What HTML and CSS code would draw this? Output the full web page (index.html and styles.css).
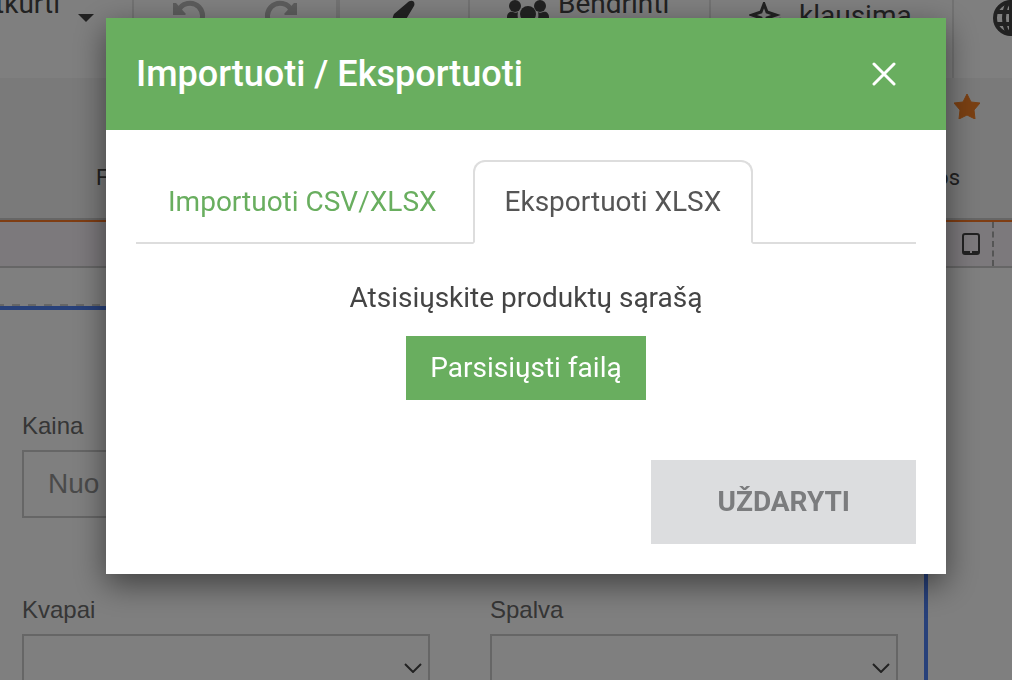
FILE: index.html
```html
<!DOCTYPE html>
<html lang="lt">
<head>
  <meta charset="UTF-8" />
  <title>Importuoti / Eksportuoti</title>
  <link rel="stylesheet" href="styles.css">
</head>
<body>
  <div class="page">
    <div class="toolbar">
      <div class="tool tool-restore">
        <span>Atkurti</span>
        <svg class="caret" width="16" height="8" viewBox="0 0 16 8"><path d="M0 0h16L8 8z" fill="currentColor"/></svg>
      </div>
      <div class="tool tool-history">
        <svg width="34" height="36" viewBox="0 0 34 36" fill="none" stroke="currentColor" stroke-width="5"><path d="M6 12C9 2 21 1 27 7c7 8 3 20-8 22"/><path d="M1 3l3 0 10 11-1 1H1z" fill="currentColor" stroke="none"/></svg>
        <svg width="34" height="36" viewBox="0 0 34 36" fill="none" stroke="currentColor" stroke-width="5"><path d="M28 12C25 2 13 1 7 7c-7 8-3 20 8 22"/><path d="M33 3l-3 0-10 11 1 1h12z" fill="currentColor" stroke="none"/></svg>
      </div>
      <div class="tool tool-brush">
        <svg width="28" height="40" viewBox="0 0 28 40" fill="currentColor"><path d="M17 13c4-4 9-2 7 3L15 31c-3 4-9 5-14 1 2-1 1-4 3-8z"/></svg>
      </div>
      <div class="tool tool-share">
        <svg width="42" height="40" viewBox="0 0 42 40" fill="currentColor"><circle cx="8" cy="16" r="6"/><circle cx="33" cy="16" r="6"/><circle cx="21" cy="24" r="8"/><path d="M0 36v-9c0-4 3-6 6-5 2 1 4 1 5 0-1 5 0 8 3 11v3zM42 36v-9c0-4-3-6-6-5-2 1-4 1-5 0 1 5 0 8-3 11v3z"/></svg>
        <span>Bendrinti</span>
      </div>
      <div class="tool tool-question">
        <svg width="32" height="30" viewBox="0 0 32 30" fill="none" stroke="currentColor" stroke-width="3"><path d="M15 2l3 8 9 3-9 3-3 9-3-9-9-3 9-3z"/><path d="M31 15l1 3 0 6-1-1-1-3-3-1 3-1z" fill="currentColor" stroke="none"/></svg>
        <span>klausima</span>
      </div>
      <div class="tool tool-language">
        <svg width="36" height="36" viewBox="0 0 36 36" fill="none" stroke="currentColor" stroke-width="4"><circle cx="18" cy="18" r="16"/><ellipse cx="18" cy="18" rx="7" ry="16"/><path d="M3 12h30M3 24h30M18 2v32"/></svg>
      </div>
    </div>

    <div class="steps">
      <svg class="star" width="26" height="25" viewBox="0 0 26 25"><path d="M13 0l4 8 9 1-6 7 1 9-8-4-8 4 1-9-6-7 9-1z" fill="currentColor" stroke="currentColor" stroke-linejoin="round"/></svg>
      <div class="step-names">
        <span>F</span>
        <span>os</span>
      </div>
    </div>

    <div class="devices">
      <svg width="18" height="22" viewBox="0 0 18 22"><rect x="1" y="1" width="16" height="20" rx="2" fill="none" stroke="currentColor" stroke-width="2"/><path d="M1 18h7v2h2v-2h7v3H1z" fill="currentColor"/></svg>
      <div class="devices-end"></div>
    </div>

    <div class="form-area">
      <div class="dashes"></div>
      <div class="form-box">
        <div class="field">
          <label for="price">Kaina</label>
          <input type="text" id="price" placeholder="Nuo">
        </div>
        <div class="field field-left">
          <label for="smell">Kvapai</label>
          <div class="select-wrap">
            <select id="smell"><option></option></select>
            <svg class="chevron" width="18" height="10" viewBox="0 0 18 10"><path d="M1 1l8 8 8-8" fill="none" stroke="currentColor" stroke-width="2"/></svg>
          </div>
        </div>
        <div class="field">
          <label for="color">Spalva</label>
          <div class="select-wrap">
            <select id="color"><option></option></select>
            <svg class="chevron" width="18" height="10" viewBox="0 0 18 10"><path d="M1 1l8 8 8-8" fill="none" stroke="currentColor" stroke-width="2"/></svg>
          </div>
        </div>
      </div>
    </div>
  </div>

  <div class="overlay">
    <div class="modal" role="dialog" aria-labelledby="modal-title">
      <div class="modal-header">
        <h2 id="modal-title">Importuoti / Eksportuoti</h2>
        <button class="close" aria-label="Uždaryti">
          <svg width="24" height="24" viewBox="0 0 24 24"><path d="M2 2l20 20M22 2L2 22" stroke="currentColor" stroke-width="3" stroke-linecap="round"/></svg>
        </button>
      </div>
      <div class="modal-body">
        <div class="tabs">
          <a href="#import">Importuoti CSV/XLSX</a>
          <a href="#export" class="active">Eksportuoti XLSX</a>
        </div>
        <div class="export">
          <p>Atsisiųskite produktų sąrašą</p>
          <button class="download">Parsisiųsti failą</button>
        </div>
        <div class="modal-footer">
          <button class="cancel">UŽDARYTI</button>
        </div>
      </div>
    </div>
  </div>
</body>
</html>
```

FILE: styles.css
```css
* {
  box-sizing: border-box;
}

body {
  margin: 0;
  height: 100vh;
  overflow: hidden;
  font-family: Roboto, sans-serif;
  font-size: 28px;
  color: #444;
  background-color: #fff;
}

button {
  border: none;
  font-family: inherit;
  font-size: 28px;
  cursor: pointer;
}

svg {
  display: block;
  flex-shrink: 0;
}

/* toolbar is scrolled a little past the top edge */
.page {
  margin-top: -10px;
}

.toolbar {
  display: flex;
  height: 88px;
  line-height: 28px;
}

.tool {
  display: flex;
  align-items: flex-start;
  flex-shrink: 0;
  border-right: 2px solid #e4e4e4;
}

.tool-restore {
  width: 134px;
  justify-content: flex-end;
  gap: 18px;
  padding-right: 38px;
}

.caret {
  margin-top: 24px;
}

.tool-history {
  width: 206px;
  padding: 10px 38px 0;
  justify-content: space-between;
  color: #b8b8b8;
  border-right: 4px solid #e4e4e4;
}

.tool-brush {
  width: 130px;
  justify-content: center;
}

.tool-share {
  width: 241px;
  padding-left: 37px;
  gap: 9px;
}

.tool-question {
  width: 243px;
  padding: 12px 0 0 38px;
  gap: 18px;
}

.tool-language {
  border-right: none;
  padding: 10px 0 0 39px;
}

.steps {
  height: 142px;
  padding: 16px 32px 0 96px;
  background-color: #f5f5f5;
  border-bottom: 2px solid #ccc;
}

.star {
  margin-left: auto;
  color: #f58026;
}

.step-names {
  display: flex;
  justify-content: space-between;
  margin-top: 45px;
  padding-right: 20px;
  font-size: 22px;
  line-height: 28px;
}

.devices {
  display: flex;
  justify-content: flex-end;
  align-items: center;
  gap: 12px;
  height: 48px;
  background-color: #f8f2f8;
  border-top: 2px solid #ff7a26;
  border-bottom: 2px solid #ccc;
}

.devices-end {
  width: 20px;
  height: 100%;
  border-left: 2px dashed #aaa;
}

.form-area {
  padding: 36px 84px 0 0;
  font-family: "Liberation Sans", Arial, sans-serif;
}

.dashes {
  height: 2px;
  background: repeating-linear-gradient(to right, #ccc 0 4px, #fff 4px 12px, #ccc 12px 16px);
}

.form-box {
  display: grid;
  grid-template-columns: 1fr 1fr;
  column-gap: 60px;
  row-gap: 78px;
  padding: 102px 26px 60px 22px;
  border: 4px solid #5082f5;
  border-left: none;
}

.field {
  display: flex;
  flex-direction: column;
  gap: 10px;
}

.field-left {
  grid-column: 1;
}

label {
  font-size: 24px;
  line-height: 28px;
  color: #6c6c6c;
}

input,
select {
  width: 100%;
  height: 68px;
  padding: 0 24px;
  border: 2px solid #ccc;
  border-radius: 0;
  background-color: #fff;
  font-family: inherit;
  font-size: 28px;
  appearance: none;
}

input::placeholder {
  color: #959595;
}

.select-wrap {
  position: relative;
}

.chevron {
  position: absolute;
  right: 8px;
  top: 29px;
}

.overlay {
  position: fixed;
  inset: 0;
  display: flex;
  justify-content: center;
  align-items: flex-start;
  padding: 18px 0 0 40px;
  background-color: rgba(0, 0, 0, 0.5);
}

.modal {
  width: 100%;
  max-width: 840px;
  background-color: #fff;
  box-shadow: 0 10px 30px rgba(0, 0, 0, 0.5);
}

.modal-header {
  display: flex;
  justify-content: space-between;
  align-items: center;
  height: 112px;
  padding: 0 50px 0 30px;
  background-color: #69ae5f;
  color: #fff;
}

h2 {
  margin: 0;
  font-size: 36px;
  font-weight: 500;
}

.close {
  padding: 0;
  background: none;
  color: #fff;
}

.modal-body {
  padding: 30px;
}

.tabs {
  display: flex;
  gap: 4px;
  border-bottom: 2px solid #ddd;
}

.tabs a {
  margin-bottom: -2px;
  padding: 20px 30px;
  border: 2px solid transparent;
  border-radius: 12px 12px 0 0;
  line-height: 40px;
  color: #69ae5f;
  text-decoration: none;
}

.tabs .active {
  border-color: #ddd;
  border-bottom-color: #fff;
  background-color: #fff;
  color: #555;
}

.export {
  display: flex;
  flex-direction: column;
  align-items: center;
  gap: 18px;
  padding: 34px 0 60px;
}

.export p {
  margin: 0;
  line-height: 40px;
}

.download {
  height: 64px;
  padding: 0 24px 2px;
  background-color: #69ae5f;
  color: #fff;
}

.modal-footer {
  display: flex;
  justify-content: flex-end;
}

.cancel {
  height: 84px;
  padding: 0 66px 2px;
  background-color: #dcdddf;
  color: #7b7c7e;
  font-weight: 700;
}
```
